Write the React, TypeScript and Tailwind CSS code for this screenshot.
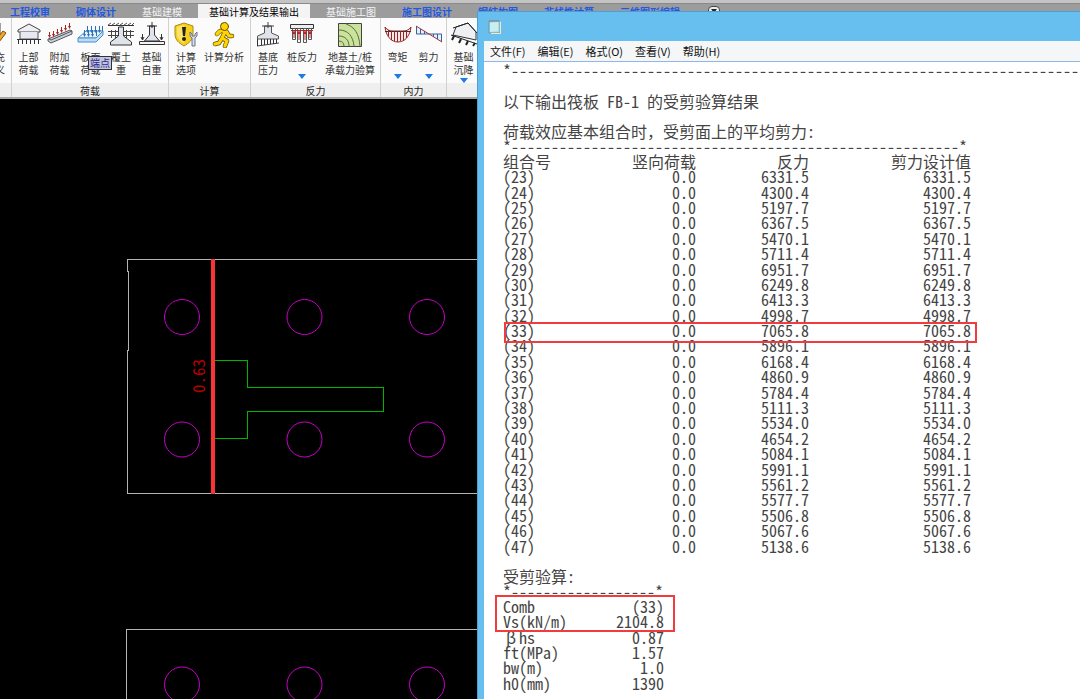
import { type ReactNode } from 'react';

interface Tool {
    lines: string[];
    width: string;
    icon: ReactNode;
    arrow?: boolean;
}

interface ToolGroup {
    title: string;
    width: string;
    tools: Tool[];
}

interface Tab {
    title: string;
    left: string;
    tone: 'module' | 'plain' | 'active';
}

const tabs: Tab[] = [
    { title: '工程校审', left: 'ml-2 w-[44px]', tone: 'module' },
    { title: '砌体设计', left: 'ml-[22px] w-[44px]', tone: 'module' },
    { title: '基础建模', left: 'ml-[22px] w-[44px]', tone: 'plain' },
    { title: '基础计算及结果输出', left: 'ml-[14px] w-[112px]', tone: 'active' },
    { title: '基础施工图', left: 'ml-[14px] w-[54px]', tone: 'plain' },
    { title: '施工图设计', left: 'ml-[22px] w-[54px]', tone: 'module' },
    { title: '钢结构图', left: 'ml-[22px] w-[44px]', tone: 'module' },
    { title: '非线性计算', left: 'ml-[22px] w-[54px]', tone: 'module' },
    { title: '三维图形编辑', left: 'ml-[22px] w-[64px]', tone: 'module' },
];

const toneClass = {
    module: 'text-[#2458e0] font-bold',
    plain: 'text-gray-100',
    active: 'bg-[#f4f4f4] text-black',
};

const FillIcon = () => (
    <svg width="28" height="26" viewBox="0 0 28 26" fill="none">
        <path d="M10 1h9v16h-9" fill="#ddd" stroke="#444" />
        <path d="M15 18l7-9 3 2-7 9-4 2z" fill="#f5a623" stroke="#7a4a10" />
    </svg>
);

const UpperLoadIcon = () => (
    <svg width="26" height="26" viewBox="0 0 26 26" fill="none">
        <path d="M2 8L13 2l11 6v2H2z" fill="#eef0f4" stroke="#444" />
        <path d="M4 10v7h18v-7" fill="#e6e9ef" stroke="#555" />
        <path d="M1 17.500h24" stroke="#333" />
        <path d="M2.500 18v4M6.500 18v4M10.500 18v4M14.500 18v4M18.500 18v4M22.500 18v4" stroke="#333" />
    </svg>
);

const ExtraLoadIcon = () => (
    <svg width="26" height="26" viewBox="0 0 26 26" fill="none">
        <path d="M1 17L23 8l2 1v3L4 21l-3-2z" fill="#c9d0e0" stroke="#555" />
        <path d="M2 17l2 1L25 9" stroke="#555" />
        <path d="M2.500 10v5M6.500 9v5M10.500 7v5M14.500 5v5M18.500 3v5M22.500 1v5" stroke="#a22" />
        <path d="M1 13l1.500 3L4 13zM5 12l1.500 3L8 12zM9 10l1.500 3 1.500-3zM13 8l1.500 3L16 8zM17 6l1.500 3L20 6zM21 4l1.500 3L24 4z" fill="#a22" />
    </svg>
);

const SlabLoadIcon = () => (
    <svg width="28" height="26" viewBox="0 0 28 26" fill="none">
        <path d="M1 16L9 9h17l-7 7z" fill="#e4f2fd" stroke="#4d8fca" />
        <path d="M1 16v4h18l7-7V9l-7 7z" fill="#b9dcf7" stroke="#4d8fca" />
        <path d="M10.500 4v6M14.500 4v6M18.500 4v6M22.500 4v6M7.500 8v6M11.500 8v6M15.500 8v6M19.500 8v6M25.500 4v5" stroke="#2b72b9" />
        <path d="M9 8l1.500 3L12 8zM13 8l1.500 3L16 8zM17 8l1.500 3L20 8zM21 8l1.500 3L24 8zM6 12l1.500 3L9 12zM10 12l1.500 3 1.500-3zM14 12l1.500 3 1.500-3z" fill="#2b72b9" />
    </svg>
);

const SoilIcon = () => (
    <svg width="28" height="26" viewBox="0 0 28 26" fill="none">
        <path d="M1 3.500h26" stroke="#333" />
        <path d="M1 3l3-2M5 3l3-2M9 3l3-2M13 3l3-2M17 3l3-2M21 3l3-2M25 3l2-2" stroke="#555" />
        <path d="M1 9.500h26M1 13.500h26M4.500 8v8M8.500 8v8M19.500 8v8M23.500 8v8" stroke="#444" />
        <path d="M11.500 5h5v9l8 6v3h-21v-3l8-6z" fill="#dfe3ea" stroke="#333" />
    </svg>
);

const FootingIcon = () => (
    <svg width="28" height="26" viewBox="0 0 28 26" fill="none">
        <path d="M11.500 4h5v9l5 6h-15l5-6z" fill="#dfe3ea" stroke="#333" />
        <path d="M1.500 19.500h25v3h-25z" fill="#f3f4f6" stroke="#333" />
        <path d="M9 4h10M14 0v6M4.500 12v6M23.500 12v6M3 15l1.500 3L6 15M22 15l1.500 3 1.500-3" stroke="#333" />
    </svg>
);

const ShieldIcon = () => (
    <svg width="26" height="26" viewBox="0 0 26 26" fill="none">
        <path d="M2 4l9-3 9 3v8c0 6-4 9-9 12-5-3-9-6-9-12z" fill="#f6cf1b" stroke="#a98b1e" />
        <path d="M4 5l7-2v18c-4-2-7-5-7-9z" fill="#fbe36c" />
        <path d="M9 5h4l-1 9h-2z" fill="#222" />
        <circle cx="11" cy="17" r="2" fill="#222" />
        <path d="M17 10v4l2 2v8h3v-8l2-2v-4l-2 2v2h-3v-2z" fill="#d7dde8" stroke="#68758c" />
    </svg>
);

const RunnerIcon = () => (
    <svg width="24" height="26" viewBox="0 0 24 26" fill="none" strokeLinecap="round" strokeLinejoin="round">
        <path d="M5 12l3-3h6l3 5h3M13 10l-3 6 5 3-2 5M10 16l-3 5-4 1" stroke="#5c4c00" strokeWidth="4.500" />
        <path d="M5 12l3-3h6l3 5h3M13 10l-3 6 5 3-2 5M10 16l-3 5-4 1" stroke="#ffd400" strokeWidth="3.200" />
        <circle cx="12.500" cy="4.500" r="4" fill="#ffd400" stroke="#5c4c00" />
    </svg>
);

const BasePressureIcon = () => (
    <svg width="26" height="26" viewBox="0 0 26 26" fill="none">
        <path d="M9.500 4h7v7l7 3v3h-21v-3l7-3z" fill="#dfe3ea" stroke="#555" />
        <path d="M7 4h12M13 0v6" stroke="#444" />
        <path d="M2 24l22-3" stroke="#444" />
        <path d="M2.500 17v7M6.500 17v6M9.500 17v6M12.500 17v5M15.500 17v5M18.500 17v5M21.500 17v4" stroke="#333" />
    </svg>
);

const PileIcon = () => (
    <svg width="26" height="26" viewBox="0 0 26 26" fill="none">
        <path d="M1.500 2.500h23v4h-23z" fill="#eceef2" stroke="#333" />
        <path d="M3.500 6.500h3v11h-3zM8.500 6.500h3v14h-3zM14.500 6.500h3v14h-3zM19.500 6.500h3v11h-3z" fill="#fff" stroke="#555" />
        <path d="M2 8.500h22M5 8v8M10 8v10M16 8v10M21 8v8" stroke="#b22" />
        <path d="M3 12l2-3 2 3zM8 12l2-3 2 3zM14 12l2-3 2 3zM19 12l2-3 2 3z" fill="#b22" />
    </svg>
);

const SoilCapacityIcon = () => (
    <svg width="24" height="26" viewBox="0 0 24 26" fill="none">
        <path d="M.5 1.500h23v23H.5z" fill="#cbe29d" stroke="#444" />
        <path d="M8 2c9 3 13 10 14 22M1 8c9 0 14 6 15 16M1 14c6 0 10 4 10 10M1 19c3 0 5 2 5 5" stroke="#57713a" />
    </svg>
);

const MomentIcon = () => (
    <svg width="28" height="26" viewBox="0 0 28 26" fill="none">
        <path d="M1 5c2 3 5 4 8 4h10c3 0 6-1 8-4-1 9-6 15-13 15S2 14 1 5z" fill="#f7e7e7" stroke="#922" />
        <path d="M1 9.500h26" stroke="#333" />
        <path d="M4.500 8v6M7.500 9v9M10.500 9v10M13.500 9v11M16.500 9v10M19.500 9v9M22.500 8v8" stroke="#922" />
    </svg>
);

const ShearIcon = () => (
    <svg width="28" height="26" viewBox="0 0 28 26" fill="none">
        <path d="M1.500 4v8H14zM14 12h12.500v8z" fill="#e6eefb" />
        <path d="M1.500 4v8h25v8M5.500 7v5M9.500 9v3M18.500 12v3M22.500 12v5" stroke="#36619f" />
        <path d="M1 4l26 16" stroke="#a33" />
    </svg>
);

const SettleIcon = () => (
    <svg width="28" height="26" viewBox="0 0 28 26" fill="none">
        <path d="M6 5l12-4 8 9v8L3 13z" fill="#eef0f4" stroke="#333" />
        <path d="M3 6l15-5 9 10M1 13l26 9" stroke="#222" />
        <path d="M4 14l-2 4M11 17l-2 4M18 19l-2 4M25 21l-2 3" stroke="#222" strokeWidth="2" />
    </svg>
);

const groups: ToolGroup[] = [
    { title: '', width: 'w-[12px]', tools: [{ lines: ['填充', '定义'], width: 'w-[28px] -ml-[20px]', icon: <FillIcon /> }] },
    {
        title: '荷载',
        width: 'w-[157px]',
        tools: [
            { lines: ['上部', '荷载'], width: 'w-[31px]', icon: <UpperLoadIcon /> },
            { lines: ['附加', '荷载'], width: 'w-[31px]', icon: <ExtraLoadIcon /> },
            { lines: ['板面', '荷载'], width: 'w-[31px]', icon: <SlabLoadIcon /> },
            { lines: ['覆土', '重'], width: 'w-[30px]', icon: <SoilIcon /> },
            { lines: ['基础', '自重'], width: 'w-[31px]', icon: <FootingIcon /> },
        ],
    },
    {
        title: '计算',
        width: 'w-[82px]',
        tools: [
            { lines: ['计算', '选项'], width: 'w-[32px]', icon: <ShieldIcon /> },
            { lines: ['计算分析'], width: 'w-[44px]', icon: <RunnerIcon /> },
        ],
    },
    {
        title: '反力',
        width: 'w-[130px]',
        tools: [
            { lines: ['基底', '压力'], width: 'w-[32px]', icon: <BasePressureIcon /> },
            { lines: ['桩反力'], width: 'w-[36px]', icon: <PileIcon />, arrow: true },
            { lines: ['地基土/桩', '承载力验算'], width: 'w-[60px]', icon: <SoilCapacityIcon /> },
        ],
    },
    {
        title: '内力',
        width: 'w-[66px]',
        tools: [
            { lines: ['弯矩'], width: 'w-[31px]', icon: <MomentIcon />, arrow: true },
            { lines: ['剪力'], width: 'w-[31px]', icon: <ShearIcon />, arrow: true },
        ],
    },
    { title: '', width: 'w-[60px]', tools: [{ lines: ['基础', '沉降'], width: 'w-[31px]', icon: <SettleIcon />, arrow: true }] },
];

const menus = ['文件(F)', '编辑(E)', '格式(O)', '查看(V)', '帮助(H)'];

const shear = [
    '6331.5', '4300.4', '5197.7', '6367.5', '5470.1', '5711.4', '6951.7', '6249.8', '6413.3',
    '4998.7', '7065.8', '5896.1', '6168.4', '4860.9', '5784.4', '5111.3', '5534.0', '4654.2',
    '5084.1', '5991.1', '5561.2', '5577.7', '5506.8', '5067.6', '5138.6',
];

const checks: [string, ReactNode, string][] = [
    ['comb', 'Comb', '(33)'],
    ['vs', 'Vs(kN/m)', '2104.8'],
    ['beta', <><span className="inline-block w-4 text-center">β</span>hs</>, '0.87'],
    ['ft', 'ft(MPa)', '1.57'],
    ['bw', 'bw(m)', '1.0'],
    ['h0', 'h0(mm)', '1390'],
];

function ToolButton({ tool }: { tool: Tool }) {
    return (
        <button type="button" className={`relative flex h-[65px] shrink-0 flex-col items-center pt-1 ${tool.width}`}>
            {tool.icon}
            <span className="mt-[2px] flex flex-col items-center text-[10px] leading-[13px] whitespace-nowrap text-[#333]">
                {tool.lines.map((line) => (
                    <span key={line}>{line}</span>
                ))}
            </span>
            {tool.arrow && (
                <svg
                    className={`absolute left-1/2 -ml-1 ${tool.lines.length > 1 ? 'bottom-0' : 'bottom-1'}`}
                    width="8"
                    height="5"
                    viewBox="0 0 8 5"
                >
                    <path d="M0 0h8L4 5z" fill="#1e78e6" />
                </svg>
            )}
        </button>
    );
}

function Ribbon() {
    return (
        <header className="relative border-b-2 border-[#a8a8a8]">
            <div className="h-1 border-b border-[#8a8a8a] bg-[#c4c4c4]" />
            <nav className="flex h-[14px] overflow-hidden bg-[#9c9c9c]">
                {tabs.map((tab) => (
                    <button
                        key={tab.title}
                        type="button"
                        className={`shrink-0 text-center text-[10px] leading-[16px] whitespace-nowrap ${tab.left} ${toneClass[tab.tone]}`}
                    >
                        {tab.title}
                    </button>
                ))}
                <span className="mt-[2px] ml-[26px] flex h-[10px] w-[12px] justify-center rounded-sm border border-[#444] bg-[#eee]">
                    <svg width="6" height="8" viewBox="0 0 6 8">
                        <path d="M0 2h6L3 6z" fill="#222" />
                    </svg>
                </span>
            </nav>
            <div className="flex bg-[#fbfbfb]">
                {groups.map((group, i) => (
                    <section key={i} className={`shrink-0 overflow-hidden border-r border-[#d0d0d0] ${group.width}`}>
                        <div className="flex pl-px">
                            {group.tools.map((tool) => (
                                <ToolButton key={tool.lines.join('')} tool={tool} />
                            ))}
                        </div>
                        <h2 className="h-[14px] bg-[#efefef] text-center text-[10px] leading-[15px] text-[#222]">{group.title}</h2>
                    </section>
                ))}
            </div>
            <div className="absolute top-[56px] left-[88px] border border-[#333] bg-[#c5c5e2] px-px text-[10px] leading-[12px] text-[#2a2a86]">
                端点
            </div>
        </header>
    );
}

function Drawing() {
    const columns = [182, 304.5, 427];
    const rows = [217, 339.5, 584.5];

    return (
        <svg className="mt-px block" width="480" height="600" viewBox="0 0 480 600" fill="none">
            <g shapeRendering="crispEdges">
                <path d="M480 159.500H127.500V171H128.500V250H127.500V393.500H480" stroke="#b4b4b4" />
                <path d="M480 529.500H126.500V600" stroke="#b4b4b4" />
                <path d="M214 260.500h33.500v27h136v24h-136v27H214" stroke="#00b400" />
                <path d="M212.500 159v235" stroke="#fa3434" strokeWidth="4" />
            </g>
            {rows.map((cy) =>
                columns.map((cx) => <circle key={`${cx}-${cy}`} cx={cx} cy={cy} r="17.500" stroke="#c800c8" />),
            )}
            <text
                transform="translate(205 293) rotate(-90)"
                fill="#b80000"
                fontFamily="'Noto Sans Mono CJK SC', monospace"
                fontSize="17"
            >
                0.63
            </text>
        </svg>
    );
}

function Report() {
    return (
        <article className="flex-1 overflow-hidden bg-white pt-px pl-[19px] text-base leading-[15px] whitespace-nowrap text-[#444] [font-family:'Noto_Sans_Mono_CJK_SC','Noto_Sans_CJK_SC',monospace]">
            <p>*{'-'.repeat(90)}</p>
            <p className="mt-4">以下输出筏板 FB-1 的受剪验算结果</p>
            <p className="mt-[15px]">荷载效应基本组合时，受剪面上的平均剪力:</p>
            <p>*{'-'.repeat(56)}*</p>
            <div className="relative w-[468px]">
                <table className="h-[400px] w-full table-fixed text-right">
                    <thead>
                        <tr>
                            <th className="w-[80px] p-0 text-left font-normal">组合号</th>
                            <th className="w-[113px] p-0 font-normal">竖向荷载</th>
                            <th className="w-[113px] p-0 font-normal">反力</th>
                            <th className="p-0 font-normal">剪力设计值</th>
                        </tr>
                    </thead>
                    <tbody>
                        {shear.map((value, i) => (
                            <tr key={i}>
                                <td className="p-0 text-left">({i + 23})</td>
                                <td className="p-0">0.0</td>
                                <td className="p-0">{value}</td>
                                <td className="p-0">{value}</td>
                            </tr>
                        ))}
                    </tbody>
                </table>
                <div className="absolute top-[168px] -right-[6px] left-px h-[21px] border-2 border-[#f03c3c]" />
            </div>
            <p className="mt-[15px]">受剪验算:</p>
            <p>*{'-'.repeat(18)}*</p>
            <div className="relative w-[161px]">
                <table className="h-[92px] w-full">
                    <tbody>
                        {checks.map(([key, name, value]) => (
                            <tr key={key}>
                                <td className="p-0">{name}</td>
                                <td className="p-0 text-right">{value}</td>
                            </tr>
                        ))}
                    </tbody>
                </table>
                <div className="absolute -top-[4px] -right-[11px] -left-[8px] h-[37px] border-2 border-[#f03c3c]" />
            </div>
        </article>
    );
}

function Notepad() {
    return (
        <section className="absolute top-[11px] right-0 bottom-0 left-[477px] flex flex-col overflow-hidden border-t border-l border-[#4a9fd6] bg-[#67bff0] pl-[6px]">
            <div className="flex h-[29px] shrink-0 items-center pl-1">
                <svg width="14" height="16" viewBox="0 0 14 16">
                    <path d="M1 2h11v12H1z" fill="#a9dbe8" stroke="#6d98a5" />
                    <path d="M12 2v12H3v1h10V3z" fill="#f4e7c0" />
                    <path d="M2 4l8-1v9l-8 1z" fill="#c9eef2" />
                    <path d="M2 1v2M4 1v2M6 1v2M8 1v2M10 1v2" stroke="#888" />
                </svg>
            </div>
            <nav className="flex h-[21px] shrink-0 gap-3 border-b border-[#8fb8e6] bg-[#f5f6f7] pl-[6px]">
                {menus.map((menu) => (
                    <button key={menu} type="button" className="text-[11px] leading-[20px] text-[#111]">
                        {menu}
                    </button>
                ))}
            </nav>
            <Report />
        </section>
    );
}

export default function App() {
    return (
        <main className="relative h-screen overflow-hidden bg-black [font-family:'Noto_Sans_CJK_SC',sans-serif]">
            <Ribbon />
            <Drawing />
            <Notepad />
        </main>
    );
}
